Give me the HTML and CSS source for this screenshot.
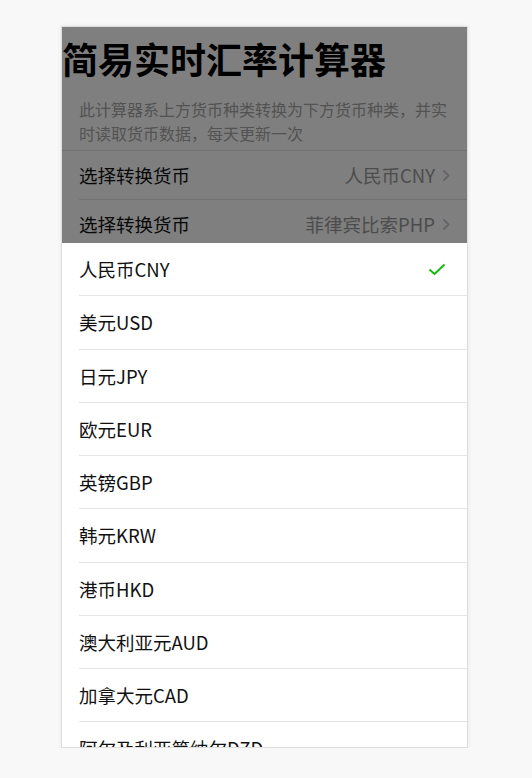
FILE: index.html
```html
<!DOCTYPE html>
<html lang="zh-CN">
<head>
<meta charset="utf-8">
<title>简易实时汇率计算器</title>
<link rel="stylesheet" href="styles.css">
</head>
<body>
<div class="frame">
  <div class="page">
    <h1 class="title">简易实时汇率计算器</h1>
    <p class="desc">此计算器系上方货币种类转换为下方货币种类，并实时读取货币数据，每天更新一次</p>
    <div class="cells">
      <div class="cell">
        <span class="cell-label">选择转换货币</span>
        <span class="cell-value">人民币CNY</span>
        <svg class="chev" width="8" height="13" viewBox="0 0 8 13"><path d="M1.5 1.5 L6.5 6.5 L1.5 11.5" fill="none" stroke="#c8c8cd" stroke-width="1.8"/></svg>
      </div>
      <div class="cell">
        <span class="cell-label">选择转换货币</span>
        <span class="cell-value">菲律宾比索PHP</span>
        <svg class="chev" width="8" height="13" viewBox="0 0 8 13"><path d="M1.5 1.5 L6.5 6.5 L1.5 11.5" fill="none" stroke="#c8c8cd" stroke-width="1.8"/></svg>
      </div>
    </div>
  </div>
  <div class="mask"></div>
  <div class="sheet">
    <ul class="list">
      <li class="item"><span>人民币CNY</span><svg class="check" width="18" height="13" viewBox="0 0 18 13"><path d="M1.5 6.5 L6.5 11 L16.5 1.5" fill="none" stroke="#09bb07" stroke-width="1.8"/></svg></li>
      <li class="item"><span>美元USD</span></li>
      <li class="item"><span>日元JPY</span></li>
      <li class="item"><span>欧元EUR</span></li>
      <li class="item"><span>英镑GBP</span></li>
      <li class="item"><span>韩元KRW</span></li>
      <li class="item"><span>港币HKD</span></li>
      <li class="item"><span>澳大利亚元AUD</span></li>
      <li class="item"><span>加拿大元CAD</span></li>
      <li class="item"><span>阿尔及利亚第纳尔DZD</span></li>
    </ul>
  </div>
</div>
</body>
</html>
```

FILE: styles.css
```css
html, body {
  margin: 0;
  padding: 0;
}
body {
  background: #f8f8f8;
  font-family: "Noto Sans CJK SC", "Noto Sans", sans-serif;
  color: #111;
}
.frame {
  position: relative;
  width: 405px;
  height: 720px;
  margin: 26px 0 0 61px;
  border: 1px solid #dedede;
  background: #fff;
  overflow: hidden;
  box-shadow: 0 0 4px rgba(0, 0, 0, 0.08);
}
.page {
  display: flex;
  flex-direction: column;
}
.title {
  margin: 0;
  font-size: 36px;
  font-weight: 700;
  line-height: 62px;
  color: #000;
}
.desc {
  margin: 0;
  padding: 8px 17px 5px;
  font-size: 16px;
  line-height: 24px;
  color: #a6a6a6;
  border-bottom: 1px solid #e5e5e5;
}
.cells {
  display: flex;
  flex-direction: column;
  padding-left: 17px;
}
.cell {
  display: flex;
  align-items: center;
  height: 48px;
  padding-right: 17px;
  border-bottom: 1px solid #e5e5e5;
}
.cell-label {
  flex: 1;
  font-size: 18.5px;
  color: #111;
}
.cell-value {
  font-size: 18.5px;
  color: #999;
  margin-right: 7px;
}
.chev {
  display: block;
}
.mask {
  position: absolute;
  inset: 0;
  background: rgba(0, 0, 0, 0.5);
}
.sheet {
  position: absolute;
  left: 0;
  right: 0;
  bottom: 0;
  height: 504px;
  background: #fff;
  overflow: hidden;
}
.list {
  list-style: none;
  margin: 0;
  padding: 0 0 0 17px;
}
.item {
  display: flex;
  align-items: center;
  justify-content: space-between;
  height: 52.25px;
  padding-right: 21px;
  border-bottom: 1px solid #e5e5e5;
  font-size: 18.5px;
  color: #111;
}
.check {
  display: block;
}
```
